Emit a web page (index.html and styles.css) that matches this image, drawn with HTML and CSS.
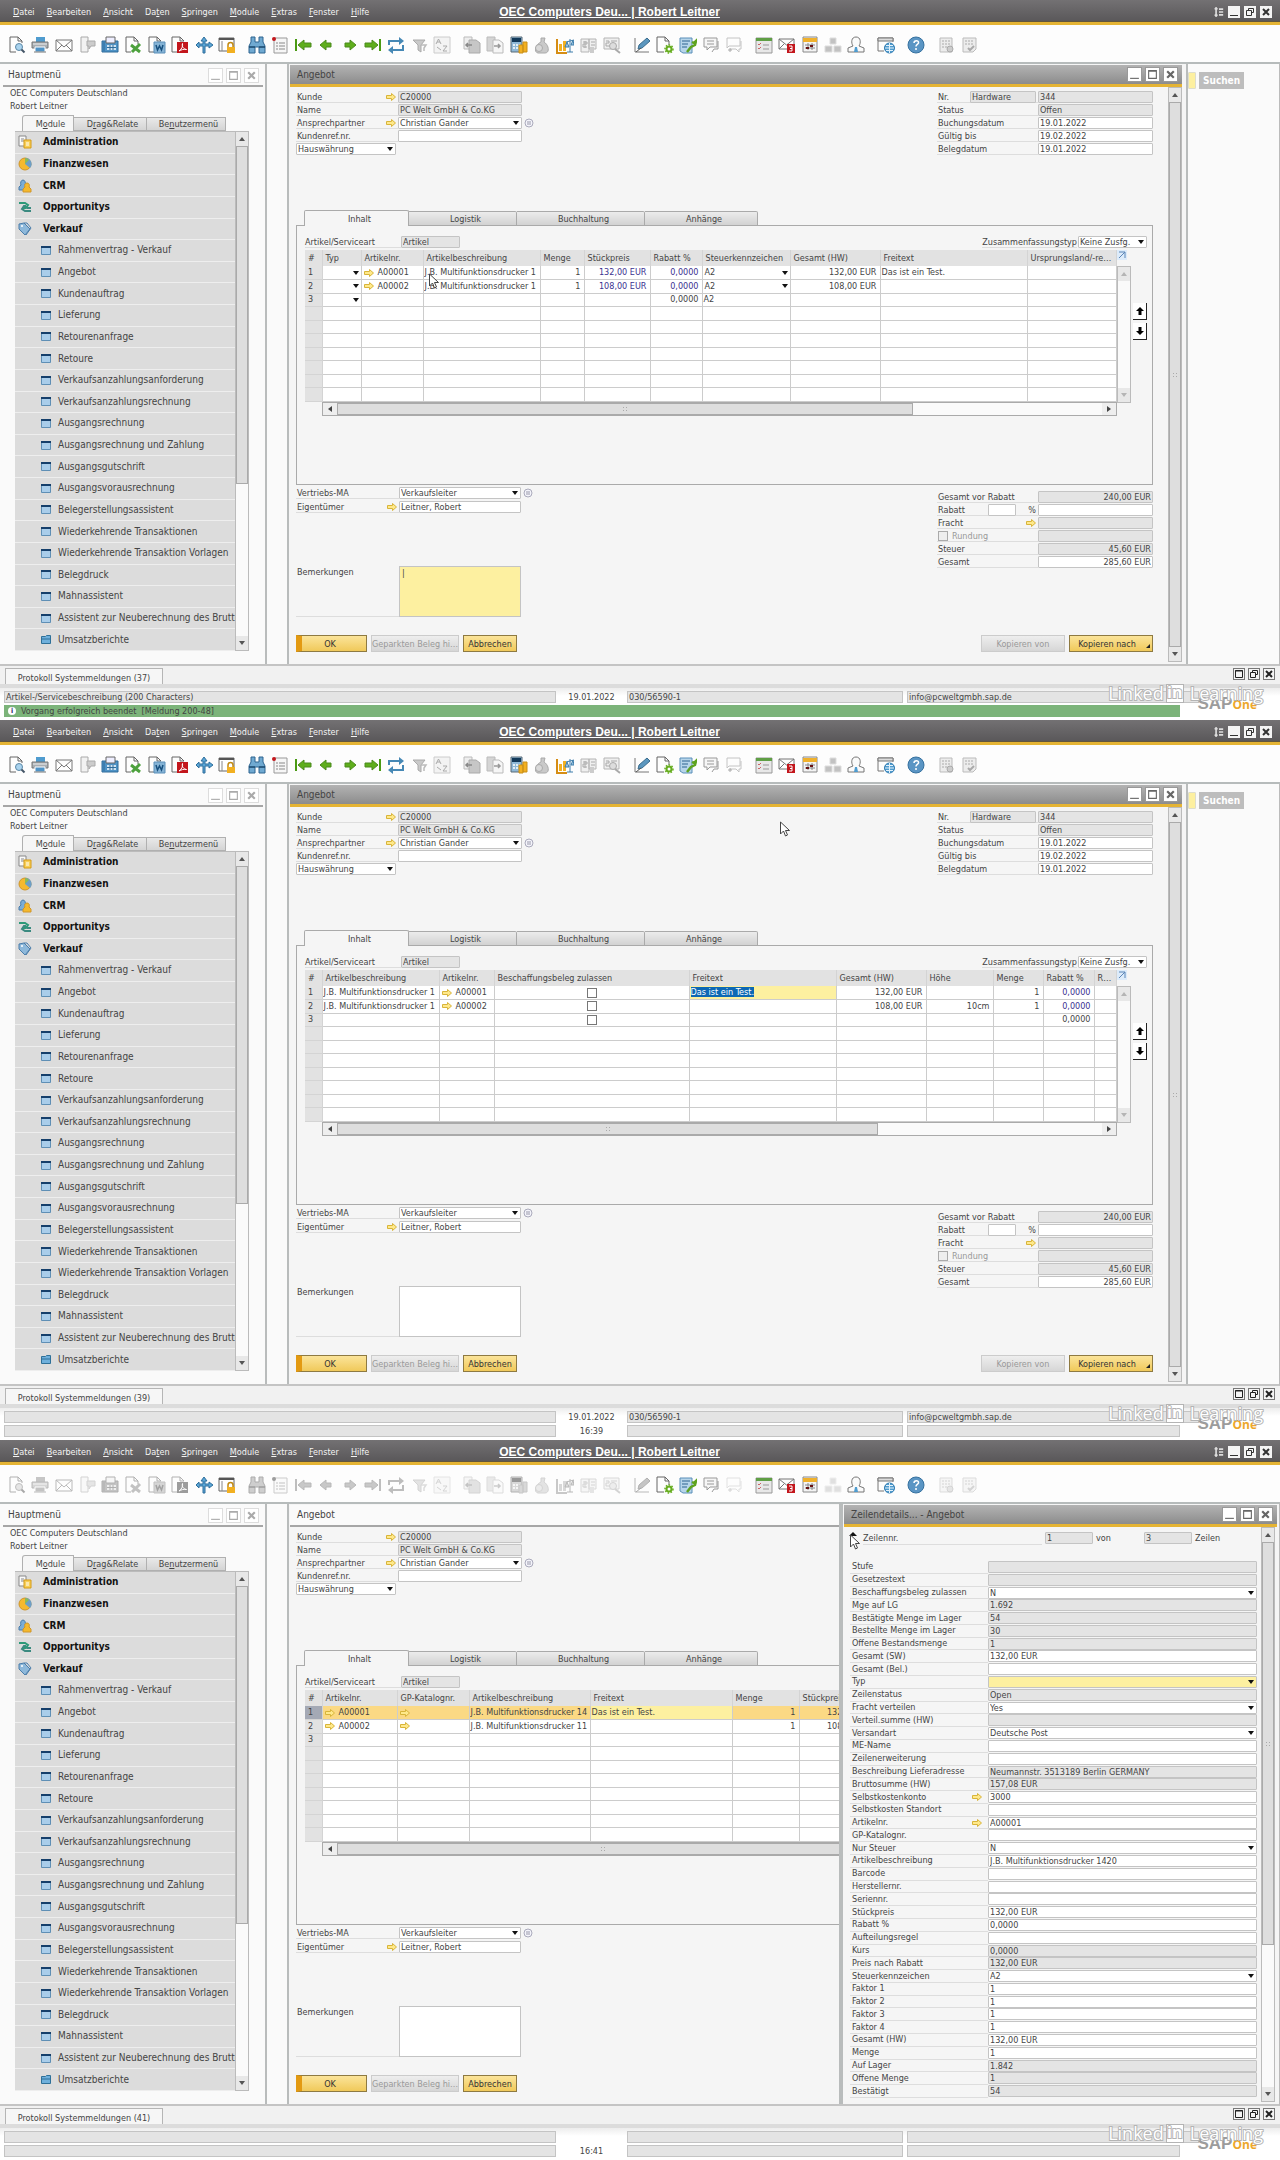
FILE: index.html
```html
<!DOCTYPE html>
<html lang="de">
<head>
<meta charset="utf-8">
<meta name="viewport" content="width=device-width, initial-scale=1">
<title>OEC Computers Deutschland – Angebot</title>
<link rel="stylesheet" href="styles.css">
</head>
<body>
<svg class="sprite" aria-hidden="true">
  <symbol id="i-preview" viewBox="0 0 18 18"><path d="M2 1h8l4 4v2M2 1v15h6M10 1v4h4" fill="none" stroke="#666"/><circle cx="11" cy="11" r="3.5" fill="#a9d3ee" stroke="#5b87a6"/><path d="M13.500 13.500l3 3" stroke="#456" stroke-width="2"/></symbol>
  <symbol id="i-print" viewBox="0 0 18 18"><path d="M5 1h9v5H5z" fill="#4f9ccf"/><path d="M1 6h16v6H1z" fill="#a8aeb3" stroke="#777"/><path d="M2 8h14" stroke="#eee"/><path d="M4 11h10v5H4z" fill="#4f93c6" stroke="#fff"/><path d="M3 16h12" stroke="#777"/></symbol>
  <symbol id="i-mail" viewBox="0 0 18 18"><path d="M1 4h16v11H1zM1 4l8 7 8-7M1 15l6-6M17 15l-6-6" fill="#fff" stroke="#777"/></symbol>
  <symbol id="i-sms" viewBox="0 0 18 18"><path d="M3 1h7v15H3z" fill="#f2f2f2" stroke="#aaa"/><path d="M9 5h8v5h-4l-2 3v-3H9z" fill="#ccc" stroke="#aaa"/></symbol>
  <symbol id="i-fax" viewBox="0 0 18 18"><path d="M1 5h16v11H1z" fill="#4f93c6" stroke="#2e6b9a"/><path d="M5 1h9v6H5z" fill="#eef" stroke="#666"/><path d="M6 9h9v5H6z" fill="#cfe3f2"/><path d="M6 11.500h9M9 9v5M12 9v5M3 6v9" stroke="#2e6b9a"/></symbol>
  <symbol id="i-excel" viewBox="0 0 18 18"><path d="M1 1h8l4 4v3M1 1v15h5M9 1v4h4" fill="none" stroke="#666"/><path d="M6 9l9 7M15 8l-8 8" stroke="#4da13d" stroke-width="3"/></symbol>
  <symbol id="i-word" viewBox="0 0 18 18"><path d="M1 1h8l4 4M1 1v15h5M9 1v4h4" fill="none" stroke="#666"/><path d="M6 6h11v11H6z" fill="#86b4d6" stroke="#5a8fb9"/><path d="M8 9l1.500 5 2-4 2 4 1.500-5" fill="none" stroke="#17507f" stroke-width="1.500"/></symbol>
  <symbol id="i-pdf" viewBox="0 0 18 18"><path d="M1 1h8l4 4M1 1v15h5M9 1v4h4" fill="none" stroke="#666"/><path d="M6 6h11v11H6z" fill="#c3161c"/><path d="M8 15c3-2 4-5 3.500-7.500-1 3 1 5.500 4 6-3-.5-5 .2-7.500 1.500z" fill="none" stroke="#fff"/></symbol>
  <symbol id="i-move" viewBox="0 0 18 18"><path d="M9 1l3 4h-2v3h4V6l4 3-4 3v-2h-4v7H8v-7H4v2L1 9l3-3v2h4V5H6z" fill="#5aa5d5" stroke="#2e6f9d"/></symbol>
  <symbol id="i-lock" viewBox="0 0 18 18"><path d="M1 2h15v13H1z" fill="#fff" stroke="#666"/><path d="M1 3h15" stroke="#555" stroke-width="2"/><path d="M4 5v10" stroke="#888"/><path d="M10 11V9a2.500 2.500 0 015 0v2" fill="none" stroke="#c28a12" stroke-width="1.500"/><path d="M9 11h8v6H9z" fill="#f2b021"/></symbol>
  <symbol id="i-find" viewBox="0 0 18 18"><path d="M3 1h4v5h4V1h4v5l2 4v7h-6v-6H7v6H1v-7l2-4z" fill="#6fa9d1" stroke="#2e6490"/><path d="M1 11h6M11 11h6" stroke="#17456b" stroke-width="1.500"/></symbol>
  <symbol id="i-list" viewBox="0 0 18 18"><path d="M3 2h13v15H3z" fill="#f6f6f6" stroke="#999"/><path d="M5 7h2M8 7h6M5 10h2M8 10h6M5 13h2M8 13h6" stroke="#888"/><circle cx="3" cy="3" r="2" fill="#c3161c"/></symbol>
  <symbol id="i-first" viewBox="0 0 18 18"><path d="M2 3v12" stroke="#4a9a14" stroke-width="2"/><path d="M4 9l6-5v3h7v4h-7v3z" fill="#5fae1c" stroke="#4b8a1c"/></symbol>
  <symbol id="i-prev" viewBox="0 0 18 18"><path d="M3 9l6-5v3h5v4H9v3z" fill="#5fae1c" stroke="#4b8a1c"/></symbol>
  <symbol id="i-next" viewBox="0 0 18 18"><path d="M15 9L9 4v3H4v4h5v3z" fill="#5fae1c" stroke="#4b8a1c"/></symbol>
  <symbol id="i-last" viewBox="0 0 18 18"><path d="M16 3v12" stroke="#4a9a14" stroke-width="2"/><path d="M14 9L8 4v3H1v4h7v3z" fill="#5fae1c" stroke="#4b8a1c"/></symbol>
  <symbol id="i-refresh" viewBox="0 0 18 18"><path d="M2 9V5h12M16 9v5H4" fill="none" stroke="#4688b5" stroke-width="2"/><path d="M12 1l5 4-5 4zM6 10l-5 4 5 4z" fill="#4688b5"/></symbol>
  <symbol id="i-filter" viewBox="0 0 18 18"><path d="M3 4h12l-4 5v7l-3-2V9z" fill="#c9c9c9" stroke="#aaa"/><path d="M11 9h5l-2 3v3" fill="none" stroke="#bbb" stroke-width="1.500"/></symbol>
  <symbol id="i-sort" viewBox="0 0 18 18"><path d="M1 1h16v16H1z" fill="#f3f3f3" stroke="#ccc"/><path d="M3 8l2.500-5L8 8M4 6h3M10 10h4l-4 5h4M4 11l4 3" fill="none" stroke="#aaa"/></symbol>
  <symbol id="i-copyfrom" viewBox="0 0 18 18"><path d="M1 1h8v12H1z" fill="#eee" stroke="#bbb"/><path d="M6 4h7l4 3v10H6z" fill="#c6c6c6" stroke="#aaa"/><path d="M3 9h6M5 7L3 9l2 2" fill="none" stroke="#888" stroke-width="1.500"/></symbol>
  <symbol id="i-copyto" viewBox="0 0 18 18"><path d="M1 1h8v14H1z" fill="#d5d5d5" stroke="#bbb"/><path d="M7 4h6l4 3v10H7z" fill="#f6f6f6" stroke="#bbb"/><path d="M8 10h6M12 8l2 2-2 2" fill="none" stroke="#999" stroke-width="1.500"/></symbol>
  <symbol id="i-calc" viewBox="0 0 18 18"><path d="M1 1h11v15H1z" fill="#8fb9d8" stroke="#5b6b77"/><path d="M2 2h9v4H2z" fill="#12395a"/><path d="M3 9h7M3 12h7" stroke="#fff" stroke-dasharray="2 1" stroke-width="1.500"/><path d="M9 9h4v8H9zM13 6h4v10h-4z" fill="#f2b021" stroke="#c98f18"/></symbol>
  <symbol id="i-bag" viewBox="0 0 18 18"><path d="M8 2h4l-1 4c5 3 6 11 1 11H5C0 16 3 8 8 6z" fill="#c9c9c9" stroke="#aaa"/><circle cx="6" cy="12" r="3.500" fill="#d9d9d9" stroke="#aaa"/></symbol>
  <symbol id="i-volume" viewBox="0 0 18 18"><path d="M1 3v14h10" fill="none" stroke="#d58d14" stroke-width="2"/><path d="M3 8h3v7H3zM7 5h3v10H7z" fill="#f2b021"/><path d="M14 3v13M10 6l8-2M9 11l2-5 2 5zM15 9l2-5 1 5zM11 16h6" fill="#9cc7e4" stroke="#3d7dab"/></symbol>
  <symbol id="i-journal" viewBox="0 0 18 18"><path d="M1 3h8v13H1zM9 3h7v10H9z" fill="#efefef" stroke="#b5b5b5"/><path d="M3 6h4v2H3v3h4M11 6h4M11 9h4M5 5v7" fill="none" stroke="#aaa"/><path d="M10 11h4v6h-4z" fill="#ccc"/></symbol>
  <symbol id="i-journal2" viewBox="0 0 18 18"><path d="M1 2h15v11H1z" fill="#efefef" stroke="#b5b5b5"/><path d="M3 5h3v2H3v3h3M8 5h6" fill="none" stroke="#aaa"/><circle cx="10" cy="10" r="3.500" fill="#ddd" stroke="#aaa"/><path d="M12 13l5 4" stroke="#aaa" stroke-width="2"/></symbol>
  <symbol id="i-pen" viewBox="0 0 18 18"><path d="M2 2v14h14" fill="none" stroke="#777"/><path d="M5 13l1-4 8-7 3 3-8 7z" fill="#5b97bf" stroke="#3b6c8d"/><path d="M3 16l5-4" stroke="#555"/></symbol>
  <symbol id="i-newdoc" viewBox="0 0 18 18"><path d="M1 1h8l4 4v4M1 1v15h7M9 1v4h4" fill="none" stroke="#666"/><circle cx="13" cy="13" r="2.500" fill="none" stroke="#65ad1e" stroke-width="2"/><circle cx="13" cy="13" r="4" fill="none" stroke="#65ad1e" stroke-dasharray="1.500 1.500" stroke-width="1.500"/></symbol>
  <symbol id="i-editdoc" viewBox="0 0 18 18"><path d="M1 2h12v15H4l-3-2z" fill="#b7d5ea" stroke="#5a8fb9"/><path d="M3 5h8M3 8h6M3 11h5" stroke="#2e6490"/><path d="M8 16l4-5 4-2 1-4-2 2-2-1" fill="none" stroke="#5da31f" stroke-width="2.500"/></symbol>
  <symbol id="i-chat" viewBox="0 0 18 18"><path d="M2 2h13v9H8l-3 3v-3H2z" fill="#f6f6f6" stroke="#999"/><path d="M5 5h7M5 8h7" stroke="#999"/><path d="M16 5v8h-4l-2 3" fill="none" stroke="#999"/></symbol>
  <symbol id="i-chat2" viewBox="0 0 18 18"><path d="M2 2h13v8H4l-2 2zM16 5v8h-2v3l-3-3H5" fill="none" stroke="#c4c4c4"/><path d="M3 14h4M5 12v4" stroke="#aaa"/></symbol>
  <symbol id="i-tasks" viewBox="0 0 18 18"><path d="M1 2h16v15H1z" fill="#e8e8e8" stroke="#999"/><path d="M1 2h16v3H1z" fill="#5f9f45"/><path d="M3 8l1 1 2-2M3 12l1 1 2-2" fill="none" stroke="#c66"/><path d="M8 9h6M8 13h6" stroke="#999"/></symbol>
  <symbol id="i-alert" viewBox="0 0 18 18"><path d="M1 3h15v10H1zM1 3l7.500 6L16 3M1 13l5-5" fill="#fff" stroke="#777"/><path d="M9 8h8v9H9z" fill="#c3161c"/><path d="M11 10h3v5h-3M12 12.500h2" fill="none" stroke="#fff"/></symbol>
  <symbol id="i-calendar" viewBox="0 0 18 18"><path d="M2 1h14v15H2z" fill="#f3f3f3" stroke="#888"/><path d="M2 2h14v4H2z" fill="#f0b12c"/><path d="M4 9h10M4 12h10M7 7v7M11 7v7" stroke="#888"/><path d="M5 11h3v2H5zM9 9h3v2H9z" fill="#611"/></symbol>
  <symbol id="i-org" viewBox="0 0 18 18"><path d="M6 2h6v6H6zM1 10h7v6H1zM10 10h7v6h-7z" fill="#c2c2c2" stroke="#ddd"/></symbol>
  <symbol id="i-user" viewBox="0 0 18 18"><path d="M6 10c-2-3-2-9 3-9s5 6 3 9l5 2v4H1v-4z" fill="#fafafa" stroke="#777"/><path d="M8 11h2l1 5H7z" fill="#4f9ccf"/></symbol>
  <symbol id="i-web" viewBox="0 0 18 18"><path d="M1 15V2h15v4" fill="none" stroke="#777"/><path d="M1 2h15v3H1z" fill="#ddd" stroke="#777"/><path d="M1 15h6" stroke="#777"/><circle cx="12.500" cy="12" r="5" fill="#4f9ccf" stroke="#2e7ab0"/><path d="M8 12h9M12.500 7v10M9 9.500h7M9 14.500h7" stroke="#e2f1fb"/></symbol>
  <symbol id="i-help" viewBox="0 0 18 18"><circle cx="9" cy="9" r="8" fill="#5a95c4" stroke="#35719f"/><path d="M7 7c0-3 5-3 4.500 0C11 8.500 9 8.500 9 10.500M9 12v2" fill="none" stroke="#fff" stroke-width="1.500"/></symbol>
  <symbol id="i-sheet" viewBox="0 0 18 18"><path d="M3 2h12v14H3z" fill="#ececec" stroke="#bbb"/><path d="M5 5h8M5 8h8M5 11h5" stroke="#aaa" stroke-dasharray="2 1"/><circle cx="13" cy="13" r="3" fill="#ccc" stroke="#aaa"/></symbol>
  <symbol id="i-sheet2" viewBox="0 0 18 18"><path d="M3 2h13v11l-3 3H3z" fill="#ececec" stroke="#bbb"/><path d="M5 5h9M5 8h9" stroke="#aaa" stroke-dasharray="2 1"/><path d="M8 12l2 2 4-4" fill="none" stroke="#aaa" stroke-width="2"/></symbol>
  <symbol id="i-admin" viewBox="0 0 14 14"><path d="M1 1h7v10H1z" fill="#fafafa" stroke="#888"/><path d="M3 4h3M3 6h3" stroke="#888"/><path d="M6 5h7v8H6z" fill="#f7cf57" stroke="#d59a16"/><path d="M8 8h3M8 10h3" stroke="#fff"/></symbol>
  <symbol id="i-finance" viewBox="0 0 14 14"><circle cx="7" cy="7" r="6" fill="#f5b92e" stroke="#d0962a"/><path d="M7 7V1a6 6 0 015 10z" fill="#6d9fc7"/><path d="M7 7V1a6 6 0 014 2z" fill="#8cba57"/></symbol>
  <symbol id="i-crm" viewBox="0 0 14 14"><path d="M1 11V8l2-2c-1-2 0-5 2-5s3 3 2 5l2 2v3z" fill="#7badd6" stroke="#4a7dab"/><path d="M5 13v-3l2-2c-1-2 0-4 2-4s3 2 2 4l2 2v3z" fill="#f5b92e" stroke="#d0962a"/></symbol>
  <symbol id="i-opp" viewBox="0 0 14 14"><path d="M1 3h6l3 2-2 3H4" fill="none" stroke="#2d9a78" stroke-width="2"/><path d="M8 6H6l-2 3 3 2h6M9 8h4" fill="none" stroke="#3b8a80" stroke-width="2"/></symbol>
  <symbol id="i-sales" viewBox="0 0 14 14"><path d="M1 2l5-1 6 6-5 6-6-6z" fill="#8db8da" stroke="#4a7dab"/><path d="M6 1h3l4 5-5 7" fill="none" stroke="#4a7dab"/><circle cx="4" cy="4" r="1" fill="#fff"/></symbol>
  <symbol id="i-form" viewBox="0 0 10 9"><path d="M.5.5h9v8h-9z" fill="#a9cdea" stroke="#5f8fb5"/><path d="M0 1h10" stroke="#153f6b" stroke-width="2"/></symbol>
  <symbol id="i-folder" viewBox="0 0 10 9"><path d="M.5 1.500h4l1-1h4v8h-9z" fill="#6fb0dc" stroke="#2f7098"/><path d="M1 4h8" stroke="#2f7098"/></symbol>
  <symbol id="i-link" viewBox="0 0 10 8"><path d="M.5 2.500h5v-2l4 3.500-4 3.500v-2h-5z" fill="#ffe98a" stroke="#d8b43a"/></symbol>
  <symbol id="i-info" viewBox="0 0 10 10"><circle cx="5" cy="5" r="4" fill="#f4f4fb" stroke="#aab"/><path d="M3 4h4M3 6h4" stroke="#99a"/></symbol>
  <symbol id="i-expand" viewBox="0 0 10 10"><path d="M0 0h10v10H0z" fill="#dcebfa"/><path d="M2 2h6v6M8 2L2 8" fill="none" stroke="#5a86b8"/></symbol>
  <symbol id="i-up" viewBox="0 0 8 10"><path d="M4 1l4 4H5.500v4h-3V5H0z" fill="#000"/></symbol>
  <symbol id="i-down" viewBox="0 0 8 10"><path d="M4 9l4-4H5.500V1h-3v4H0z" fill="#000"/></symbol>
  <symbol id="i-cursor" viewBox="0 0 10 16"><path d="M.5 1v12l3-3 2 5 2-1-2-4.500h4z" fill="#fff" stroke="#444"/></symbol>
  <symbol id="i-min" viewBox="0 0 10 10"><path d="M1 8.500h8" stroke="currentColor"/></symbol>
  <symbol id="i-max" viewBox="0 0 10 10"><path d="M1.500 1.500h7v7h-7zM1 2h8" fill="none" stroke="currentColor"/></symbol>
  <symbol id="i-restore" viewBox="0 0 10 10"><path d="M3.500 3.500v-2h5v4h-2M1.500 3.500h5v5h-5z" fill="none" stroke="currentColor"/></symbol>
  <symbol id="i-close" viewBox="0 0 10 10"><path d="M2 2l6 6M8 2L2 8" stroke="currentColor" stroke-width="2"/></symbol>
  <symbol id="i-arrange" viewBox="0 0 12 12"><path d="M2.500 1v10M1 3l1.500-2L4 3M1 9l1.500 2L4 9M6 2.500h5M6 6h5M6 9.500h5" fill="none" stroke="#ddd" stroke-width="2"/></symbol>
</svg>
<main id="screens"></main>
<script src="app.js"></script>
</body>
</html>
```
FILE: styles.css
```css
* { box-sizing: border-box; }
html, body { margin: 0; }
body {
  font-family: "DejaVu Sans Condensed", Tahoma, "Noto Sans", sans-serif;
  font-size: 9px;
  line-height: 12px;
  color: #444;
  background: #fafafa;
}
button, input, select, textarea { font: inherit; color: inherit; margin: 0; padding: 0; border-radius: 0; }
button { border: 0; background: none; }
ul { list-style: none; margin: 0; padding: 0; }
svg { display: block; flex: none; }
a { color: inherit; text-decoration: none; }
.sprite { position: absolute; width: 0; height: 0; }
#screens { display: grid; grid-auto-rows: 1fr; min-height: 100vh; }

.screen { position: relative; display: flex; flex-direction: column; min-width: 0; overflow: hidden; }

/* menu bar */
.menubar {
  display: flex; align-items: center; height: 25px; padding-bottom: 2px;
  color: #f4f4f4; background: linear-gradient(#737173, #5a585a 21px, #6b5420 22px, #e5b434 22px);
}
.menubar nav { flex: 0 0 39%; display: flex; gap: 12px; padding-left: 13px; }
.company { margin: 0; font: bold 12px/14px "Liberation Sans", sans-serif; text-decoration: underline; color: #fff; white-space: nowrap; }
.app-controls { margin-left: auto; display: flex; gap: 4px; align-items: center; padding-right: 8px; }
.app-controls button { width: 12px; height: 12px; color: #333; background: #f4f4f4; display: grid; place-items: center; }
.app-controls svg { width: 10px; height: 10px; }

/* toolbar */
.toolbar { display: flex; gap: 12px; height: 39px; padding: 3px 8px 0; align-items: center; background: #fdfdfd; border-bottom: 2px solid #b6bbbb; }
.group { display: flex; justify-content: space-between; }
.group button, .group svg { width: 18px; height: 18px; }
.g10 { width: 228px; } .g9 { width: 203px; } .g7 { width: 158px; } .g5 { width: 110px; } .g2 { width: 41px; }
.group button.off { filter: grayscale(1) opacity(.5); }

/* desktop */
.desktop { flex: 1; display: flex; min-height: 0; border-bottom: 2px solid #c4c4c4; border-right: 1px solid #bbb; }
.window { display: flex; flex-direction: column; min-width: 0; min-height: 0; background: #f5f5f5; border: 2px solid #b9bcbc; border-width: 0 2px 0 2px; padding: 1px 2px 2px; }
.titlebar { flex: none; display: flex; align-items: center; gap: 3px; height: 22px; padding: 3px 4px 3px 7px; font-size: 10px; border-bottom: 3px solid #e5b434; background: linear-gradient(#b3b3b3, #8c8c8c); }
.titlebar h2 { flex: 1; margin: 0; font: inherit; white-space: nowrap; }
.titlebar button { width: 15px; height: 15px; border: 1px solid #999; background: #fff; color: #666; display: grid; place-items: center; }
.titlebar svg { width: 11px; height: 11px; }
.idle .titlebar { background: #fafafa; border-bottom: 2px solid #a6a6a6; }
.idle .titlebar button { border-color: #ddd; color: #aaa; }

/* main menu */
.mainmenu { flex: 0 0 267px; border-left: 0; padding-left: 3px; background: #fafafa; }
.mainmenu .titlebar { padding-left: 5px; }
.who { padding: 0 7px; line-height: 13px; }
.who p { margin: 0; }
.menutabs { display: flex; align-items: flex-end; margin: 2px 0 0 19px; }
.menutabs button { height: 14px; border: 1px solid #b0b0b0; border-left-width: 0; background: linear-gradient(#e9e9e9, #d4d4d4); padding: 0 0 0 5px; }
.menutabs button:first-child { height: 16px; width: 52px; background: #f6f6f6; border-left-width: 1px; border-bottom: 0; border-radius: 3px 0 0; }
.menutabs button:nth-child(2) { width: 73px; }
.menutabs button:nth-child(3) { width: 79px; }
.tree { flex: 1; display: flex; min-height: 0; margin: 0 14px 11px 12px; }
.tree ul { flex: 1; min-width: 0; display: grid; grid-auto-rows: 1fr; background: #dcdcdc; border-top: 1px solid #bbb; }
.tree li { display: flex; align-items: center; min-height: 0; border-bottom: 1px solid #eee; overflow: hidden; font-size: 10px; }
.tree li a { display: flex; align-items: center; white-space: nowrap; padding-left: 26px; gap: 7px; }
.tree li svg { width: 10px; height: 9px; }
.tree .area { font-weight: bold; color: #111; }
.tree .area a { padding-left: 3px; gap: 11px; }
.tree .area svg { width: 14px; height: 14px; }

/* scroll bars */
.vscroll { flex: 0 0 14px; display: grid; grid-template-rows: 14px auto 1fr 14px; border: 1px solid #bbb; background: #fafafa; }
.vscroll i { display: grid; place-items: center; background: #e8e8e8; }
.vscroll i::after { content: ""; border: 3px solid transparent; border-bottom: 4px solid #555; border-top: 0; }
.vscroll i:last-child { grid-row: 4; }
.vscroll i:last-child::after { border-bottom: 0; border-top: 4px solid #555; }
.thumb { background: #dedede; border: 1px solid #aaa; display: grid; place-items: center; overflow: hidden; }
.tree .vscroll { grid-template-rows: 14px 69fr 31fr 14px; }
.main .vscroll.page { grid-template-rows: 14px 1fr 0 14px; }
.vscroll.faint i::after { opacity: .35; }
.faint .thumb { border: 0; background: none; }
.hscroll { display: grid; grid-template-columns: 14px auto 1fr 14px; height: 14px; margin-left: 17px; border: 1px solid #aaa; background: #fafafa; }
.hscroll i { display: grid; place-items: center; background: #eee; }
.hscroll i::after { content: ""; border: 3px solid transparent; border-right: 4px solid #444; border-left: 0; }
.hscroll i:last-child::after { border-right: 0; border-left: 4px solid #444; }
.grip { width: 6px; height: 6px; background: radial-gradient(circle, #aaa 1px, transparent 1px) 0 0 / 3px 3px; }

/* document window */
.main { flex: 1; margin-left: 20px; padding-left: 1px; padding-right: 4px; }
.rest { flex: 0 0 91px; display: flex; gap: 3px; padding-top: 8px; align-items: flex-start; }
.rest input[type=text] { width: 8px; height: 17px; border: 1px solid #ddc; background: #fdf0a0; }
.rest button { height: 17px; padding: 0 4px; font-weight: bold; font-size: 10px; color: #fff; background: #bdbdbd; }
.doc { flex: 1; display: flex; min-height: 0; overflow: hidden; }
.sheet { flex: 1; display: flex; flex-direction: column; padding: 4px 15px 10px 6px; min-width: 0; }
.clipped { padding-right: 0; }
.clipped .sheet { flex: 0 0 878px; }
.head { display: flex; justify-content: space-between; align-items: flex-start; height: 119px; }
.form { display: grid; grid-template-columns: 102px 124px 14px; grid-auto-rows: 12px; row-gap: 1px; }
.form.right { grid-template-columns: 101px 115px; }
.form label, .form .cap { grid-column: 1; display: flex; align-items: center; justify-content: space-between; height: 12px; padding: 0 2px 0 1px; border-bottom: 1px solid #ddd; white-space: nowrap; }
.form .cap label { border: 0; padding: 0; }
svg.link { width: 10px; height: 8px; }
svg.info { width: 10px; height: 10px; margin: 1px 2px; }
input[type=text], .combo select { width: 100%; height: 12px; border: 1px solid #c4c4c4; border-radius: 1px; background: #fff; padding: 0 1px; line-height: 10px; }
input[type=text]:read-only { background: #e4e4e4; }
.cap input[type=text] { width: 66px; }
.cap input[type=text].small { width: 28px; }
.num { text-align: right; }
.combo { position: relative; display: block; }
.combo select { display: block; appearance: none; }
.combo::after { content: ""; position: absolute; right: 3px; top: 4px; border: 3px solid transparent; border-top: 4px solid #111; border-bottom: 0; pointer-events: none; }
.combo.wide { grid-column: 1; width: 100px; }
.hot select { background: #fdf0a0; }

.tabs { display: flex; align-items: flex-end; height: 16px; padding-left: 8px; position: relative; z-index: 1; margin-bottom: -1px; }
.tabs button { height: 15px; border: 1px solid #aaa; border-left-width: 0; background: linear-gradient(#ececec, #d2d2d2); border-radius: 0 2px 0 0; padding-left: 6px; }
.tabs button:first-child { height: 16px; width: 105px; background: #f5f5f5; border-left-width: 1px; border-bottom: 0; border-radius: 2px 2px 0 0; }
.tabs button:nth-child(2) { width: 108px; } .tabs button:nth-child(3) { width: 128px; } .tabs button:nth-child(4) { width: 113px; }
.panel { height: 260px; border: 1px solid #aaa; padding: 10px 5px 0 8px; }
.panel-top { display: flex; height: 14px; align-items: flex-start; }
.panel-top label { white-space: nowrap; border-bottom: 1px solid #ddd; height: 12px; }
.panel-top label:first-child { width: 96px; }
.panel-top input[type=text] { width: 59px; }
.panel-top label.sum { margin-left: auto; }
.panel-top .combo { width: 69px; margin-left: 1px; }
.matrix { display: flex; }
.gridbox { flex: 1; min-width: 0; }
table { width: 100%; height: 152px; table-layout: fixed; border-collapse: collapse; }
th, td { padding: 0 3px; font-weight: normal; text-align: left; overflow: hidden; white-space: nowrap; line-height: 11px; }
th { height: 16px; background: #e2e2e2; border-right: 1px solid #d4d4d4; }
td { height: 13px; background: #fff; border: 1px solid #ccc; border-width: 0 1px 1px 0; padding: 0 1px; }
tbody th { height: 13px; background: #e2e2e2; border-bottom: 1px solid #d4d4d4; }
td.num { padding-right: 3px; }
td.blue { color: #3a3290; }
.cell { display: flex; gap: 4px; align-items: center; height: 11px; padding: 0 1px; }
.drop::after { content: ""; margin-left: auto; border: 3px solid transparent; border-top: 4px solid #111; border-bottom: 0; }
td input[type=checkbox] { appearance: none; display: block; width: 10px; height: 10px; margin: 0 auto; border: 1px solid #777; background: #fff; }
td.edit { background: #fdf0a0; }
td.edit mark { background: #0d68b4; color: #fff; }
tr.picked td { background: #fbd984; }
tr.picked td.edit { background: #fdf0a0; }
tr.picked th { background: #a4a9b5; }
.side { flex: 0 0 14px; display: flex; flex-direction: column; }
.side > svg { width: 10px; height: 10px; margin-bottom: 6px; }
.side .vscroll { flex: 0 0 137px; }
.movers { flex: 0 0 16px; padding: 53px 0 0 2px; display: flex; flex-direction: column; gap: 3px; }
.movers button { width: 14px; height: 17px; display: grid; place-items: center; border: 1px solid #222; border-width: 0 1px 1px 0; background: #fff; }
.movers svg { width: 8px; height: 10px; }

.foot { flex: 1; display: flex; justify-content: space-between; padding-top: 2px; align-items: flex-start; }
.foot .form:first-child { row-gap: 2px; grid-template-columns: 103px 122px 14px; }
.foot .form.right { padding-top: 4px; }
.memo { margin-top: 51px; height: 51px; }
.form label.memo { align-items: flex-start; height: 51px; }
textarea.memo { display: block; width: 100%; resize: none; border: 1px solid #c4c4c4; background: #fff; padding: 0 2px; }
textarea.hot { background: #fdf0a0; }
.check input { appearance: none; width: 10px; height: 10px; border: 1px solid #aaa; background: #eee; }
.form .cap.check { justify-content: flex-start; gap: 4px; color: #999; }
.buttons { display: flex; gap: 4px; }
.buttons button { height: 17px; border: 1px solid #8e7a42; background: linear-gradient(#fbe49a, #f0c95a); color: #333; white-space: nowrap; }
.buttons .ok { width: 71px; padding-right: 8px; border-left: 6px solid #e39a12; }
.buttons .park { width: 88px; }
.buttons .cancel { width: 54px; }
.buttons button:disabled { border-color: #ccc; background: linear-gradient(#eee, #d6d6d6); color: #999; }
.buttons .copy { width: 84px; }
.buttons .from { margin-left: auto; }
.buttons .menu { position: relative; padding-right: 8px; }
.buttons .menu::after { content: ""; position: absolute; right: 2px; bottom: 3px; border: 2px solid transparent; border-right-color: #222; border-bottom-color: #222; }

/* line details window */
.details { flex: 0 0 438px; border-right: 0; padding-left: 1px; }
.details .rows { flex: 1; min-width: 0; display: flex; flex-direction: column; padding: 4px 4px 4px 6px; }
.lineno { display: flex; align-items: center; height: 30px; padding-bottom: 16px; gap: 3px; }
.lineno input[type=text] { width: 48px; }
.lineno .first { width: 179px; border-bottom: 1px solid #ddd; margin-left: 13px; }
.lineno .of { width: 45px; }
.fields { flex: 1; display: grid; grid-auto-rows: 1fr; min-height: 0; }
.fields > div { display: grid; grid-template-columns: 138px 1fr; min-height: 0; }
.fields label { display: flex; justify-content: space-between; align-items: center; line-height: 11px; padding: 0 6px 0 2px; border-bottom: 1px solid #ddd; min-height: 0; }
.details .vscroll { grid-template-rows: 14px 74fr 26fr 14px; margin-right: 2px; }

/* status area */
.logbar { display: flex; align-items: flex-start; height: 22px; padding: 2px 5px 0; border-bottom: 4px solid #dcdcdc; background: #f1f1f1; }
.logbar .log { width: 158px; height: 16px; padding-top: 2px; border: 1px solid #b5b5b5; border-bottom: 0; background: #f6f6f6; }
.logbar .app-controls { padding: 0; gap: 3px; }
.logbar .app-controls button { width: 12px; height: 12px; border: 1px solid #777; color: #222; }
.status { display: grid; grid-template-columns: 552px 1fr 276px 273px 96px; grid-auto-rows: 12px; gap: 2px 4px; height: 32px; padding: 3px 0 2px 4px; background: linear-gradient(#ededed, #fff 8px); }
.status output { border: 1px solid #c4c4c4; background: #e4e4e4; padding: 0 1px; line-height: 11px; overflow: hidden; white-space: nowrap; }
.status time { text-align: center; }
.status .tail { margin-left: -5px; width: 20px; border-left: 0; grid-column: 5; }
.status .done { grid-column: 1 / 5; display: flex; gap: 5px; padding-left: 4px; align-items: center; background: #7cb47a; border: 0; }
.status .done b { width: 8px; height: 8px; border-radius: 4px; background: #fff; color: #226; font-size: 7px; line-height: 8px; text-align: center; }
.status .done, .status .second { grid-row: 2; }

/* brand marks over the status area */
.brand { position: absolute; right: 17px; bottom: 16px; display: flex; align-items: center; gap: 2px; font: 18px/22px "Open Sans", sans-serif; color: #fff; -webkit-text-stroke: 2px #b4b4b4; paint-order: stroke fill; white-space: nowrap; }
.brand b { width: 18px; height: 19px; font-size: 16px; line-height: 15px; text-align: center; border: 1px solid #b4b4b4; background: #fff; margin-right: 4px; }
.sap { position: absolute; right: 23px; bottom: 6px; font: bold 17px/20px "Liberation Sans", sans-serif; color: #9c9c9c; }
.sap span { font: bold 12px/14px "Open Sans", sans-serif; color: #eda72c; }
.cursor { position: absolute; width: 10px; height: 16px; }
.at-row { left: 429px; top: 273px; }
.at-head { left: 780px; top: 101px; }
.at-line { left: 850px; top: 94px; }
.first-mark { border: 4px solid transparent; border-bottom-color: #111; border-top: 0; position: absolute; left: 849px; top: 92px; }
```
FILE: app.js
```js
const icon = (name, cls = '') => `<svg class="${cls}" aria-hidden="true"><use href="#i-${name}"/></svg>`;
const link = icon('link', 'link');
// "_x" marks the access key of a caption
const key = text => text.replace(/_(.)/, '<u>$1</u>');

const menus = ['_Datei', '_Bearbeiten', '_Ansicht', 'Da_ten', '_Springen', '_Module', '_Extras', '_Fenster', '_Hilfe'];
const tools = [
  ['g10', 'preview print mail sms fax excel word pdf move lock'],
  ['g9', 'find list first prev next last refresh filter sort'],
  ['g7', 'copyfrom copyto calc bag volume journal journal2'],
  ['g5', 'pen newdoc editdoc chat chat2'],
  ['g5', 'tasks alert calendar org user'],
  ['g1', 'web'], ['g1', 'help'],
  ['g2', 'sheet sheet2'],
];
const alwaysOn = 'move lock newdoc editdoc chat tasks alert calendar user web help'.split(' ');
const areas = [['admin', 'Administration'], ['finance', 'Finanzwesen'], ['crm', 'CRM'], ['opp', 'Opportunitys'], ['sales', 'Verkauf']];
const entries = ['Rahmenvertrag - Verkauf', 'Angebot', 'Kundenauftrag', 'Lieferung', 'Retourenanfrage', 'Retoure',
  'Verkaufsanzahlungsanforderung', 'Verkaufsanzahlungsrechnung', 'Ausgangsrechnung', 'Ausgangsrechnung und Zahlung',
  'Ausgangsgutschrift', 'Ausgangsvorausrechnung', 'Belegerstellungsassistent', 'Wiederkehrende Transaktionen',
  'Wiederkehrende Transaktion Vorlagen', 'Belegdruck', 'Mahnassistent', 'Assistent zur Neuberechnung des Brutto'];

const winButtons = names => names.map(n => `<button type="button" aria-label="${n}">${icon(n)}</button>`).join('');
const vscroll = (cls, grip) => `<div class="vscroll ${cls}"><i></i><div class="thumb">${grip ? '<span class="grip"></span>' : ''}</div><i></i></div>`;

// cell builders
const item = t => ({ html: `<div class="cell">${link}<span>${t}</span></div>` });
const drop = t => ({ html: `<div class="cell drop">${t}</div>` });
const num = t => ({ html: t, cls: 'num' });
const blue = t => ({ html: t, cls: 'num blue' });
const edit = t => ({ html: t, cls: 'edit' });
const box = () => ({ html: '<input type="checkbox" aria-label="Beschaffungsbeleg zulassen">' });

const screens = [
  { log: 37, hot: true, cursor: 'at-row', thumb: 576,
    cols: [['Typ', 39], ['Artikelnr.', 62], ['Artikelbeschreibung', 117], ['Menge', 44], ['Stückpreis', 66], ['Rabatt %', 52],
      ['Steuerkennzeichen', 88], ['Gesamt (HW)', 90], ['Freitext', 147], ['Ursprungsland/-re…', 0]],
    rows: [
      [drop(''), item('A00001'), 'J.B. Multifunktionsdrucker 1', num('1'), blue('132,00 EUR'), blue('0,0000'), drop('A2'), num('132,00 EUR'), 'Das ist ein Test.', ''],
      [drop(''), item('A00002'), 'J.B. Multifunktionsdrucker 1', num('1'), blue('108,00 EUR'), blue('0,0000'), drop('A2'), num('108,00 EUR'), '', ''],
      [drop(''), '', '', '', '', num('0,0000'), drop('A2'), '', '', '']] },
  { log: 39, time: '16:39', cursor: 'at-head', thumb: 541,
    cols: [['Artikelbeschreibung', 117], ['Artikelnr.', 55], ['Beschaffungsbeleg zulassen', 195], ['Freitext', 147], ['Gesamt (HW)', 90],
      ['Höhe', 67], ['Menge', 50], ['Rabatt %', 51], ['R…', 0]],
    rows: [
      ['J.B. Multifunktionsdrucker 1', item('A00001'), box(), edit('<mark>Das ist ein Test.</mark>'), num('132,00 EUR'), '', num('1'), blue('0,0000'), ''],
      ['J.B. Multifunktionsdrucker 1', item('A00002'), box(), '', num('108,00 EUR'), num('10cm'), num('1'), blue('0,0000'), ''],
      ['', '', box(), '', '', '', '', num('0,0000'), '']] },
  { log: 41, time: '16:41', cursor: 'at-line', thumb: 531, details: true,
    cols: [['Artikelnr.', 75], ['GP-Katalognr.', 72], ['Artikelbeschreibung', 121], ['Freitext', 142], ['Menge', 67], ['Stückpreis', 79], ['', 0]],
    rows: [
      [item('A00001'), item(''), 'J.B. Multifunktionsdrucker 14', edit('Das ist ein Test.'), num('1'), num('132,00 EUR'), ''],
      [item('A00002'), item(''), 'J.B. Multifunktionsdrucker 11', '', num('1'), num('108,00 EUR'), ''],
      ['', '', '', '', '', '', '']] },
];
// the third row has a tax code without a list arrow
screens[0].rows[2][6] = 'A2';

// [label, value, kind]: r = read only, e = editable, s = list, h = focused list, l = editable with link arrow
const lineFields = [
  ['Stufe', '', 'r'], ['Gesetzestext', '', 'r'], ['Beschaffungsbeleg zulassen', 'N', 's'], ['Mge auf LG', '1.692', 'r'],
  ['Bestätigte Menge im Lager', '54', 'r'], ['Bestellte Menge im Lager', '30', 'r'], ['Offene Bestandsmenge', '1', 'r'],
  ['Gesamt (SW)', '132,00 EUR', 'e'], ['Gesamt (Bel.)', '', 'e'], ['Typ', '', 'h'], ['Zeilenstatus', 'Open', 'r'],
  ['Fracht verteilen', 'Yes', 's'], ['Verteil.summe (HW)', '', 'r'], ['Versandart', 'Deutsche Post', 's'], ['ME-Name', '', 'e'],
  ['Zeilenerweiterung', '', 'e'], ['Beschreibung Lieferadresse', 'Neumannstr. 3513189 Berlin GERMANY', 'r'],
  ['Bruttosumme (HW)', '157,08 EUR', 'r'], ['Selbstkostenkonto', '3000', 'l'], ['Selbstkosten Standort', '', 'e'],
  ['Artikelnr.', 'A00001', 'l'], ['GP-Katalognr.', '', 'e'], ['Nur Steuer', 'N', 's'],
  ['Artikelbeschreibung', 'J.B. Multifunktionsdrucker 1420', 'e'], ['Barcode', '', 'e'], ['Herstellernr.', '', 'e'],
  ['Seriennr.', '', 'e'], ['Stückpreis', '132,00 EUR', 'e'], ['Rabatt %', '0,0000', 'e'], ['Aufteilungsregel', '', 'e'],
  ['Kurs', '0,0000', 'r'], ['Preis nach Rabatt', '132,00 EUR', 'r'], ['Steuerkennzeichen', 'A2', 's'], ['Faktor 1', '1', 'e'],
  ['Faktor 2', '1', 'e'], ['Faktor 3', '1', 'e'], ['Faktor 4', '1', 'e'], ['Gesamt (HW)', '132,00 EUR', 'e'], ['Menge', '1', 'e'],
  ['Auf Lager', '1.842', 'r'], ['Offene Menge', '1', 'r'], ['Bestätigt', '54', 'r'],
];

const text = (id, value, ro, cls = '') => `<input type="text" id="${id}" value="${value}" class="${cls}"${ro ? ' readonly' : ''}>`;
const combo = (id, value, cls = '', name = '') =>
  `<span class="combo ${cls}"><select id="${id}"${name ? ` aria-label="${name}"` : ''}><option>${value}</option></select></span>`;
const label = (id, caption, extra = '') => `<label for="${id}"><span>${key(caption)}</span>${extra}</label>`;

const topBars = s => `
  <header class="menubar">
    <nav>${menus.map(m => `<a href="#">${key(m)}</a>`).join('')}</nav>
    <h1 class="company">OEC Computers Deu... | Robert Leitner</h1>
    <div class="app-controls">${icon('arrange')}${winButtons(['min', 'restore', 'close'])}</div>
  </header>
  <div class="toolbar">${tools.map(([cls, names]) => `<div class="group ${cls}">${names.split(' ').map(n =>
    `<button type="button" aria-label="${n}"${s.details && !alwaysOn.includes(n) ? ' class="off"' : ''}>${icon(n)}</button>`).join('')}</div>`).join('')}</div>`;

const mainMenu = () => `
  <aside class="window idle mainmenu">
    <div class="titlebar"><h2>Hauptmenü</h2>${winButtons(['min', 'max', 'close'])}</div>
    <div class="who"><p>OEC Computers Deutschland</p><p>Robert Leitner</p></div>
    <div class="menutabs">${['M_odule', 'D_rag&amp;Relate', 'Be_nutzermenü'].map(t => `<button type="button">${key(t)}</button>`).join('')}</div>
    <div class="tree"><ul>
      ${areas.map(([i, t]) => `<li class="area"><a href="#">${icon(i)}${t}</a></li>`).join('')}
      ${entries.map(t => `<li><a href="#">${icon('form')}${t}</a></li>`).join('')}
      <li><a href="#">${icon('folder')}Umsatzberichte</a></li>
    </ul>${vscroll('')}</div>
  </aside>`;

const matrix = s => {
  const cell = c => typeof c === 'string' ? `<td>${c}</td>` : `<td class="${c.cls || ''}">${c.html}</td>`;
  const rows = Array.from({ length: 10 }, (_, i) => {
    const cells = s.rows[i] || s.cols.map(() => '');
    return `<tr${s.details && i === 0 ? ' class="picked"' : ''}><th scope="row">${i < 3 ? i + 1 : ''}</th>${cells.map(cell).join('')}</tr>`;
  }).join('');
  return `<div class="matrix"><div class="gridbox"><table>
      <colgroup><col style="width:17px">${s.cols.map(c => c[1] ? `<col style="width:${c[1]}px">` : '<col>').join('')}</colgroup>
      <thead><tr><th scope="col">#</th>${s.cols.map(c => `<th scope="col">${c[0]}</th>`).join('')}</tr></thead>
      <tbody>${rows}</tbody></table>
      <div class="hscroll"><i></i><div class="thumb" style="width:${s.thumb}px"><span class="grip"></span></div><span></span><i></i></div></div>
    <div class="side">${icon('expand')}${vscroll('faint')}</div>
    <div class="movers"><button type="button" aria-label="Nach oben">${icon('up')}</button><button type="button" aria-label="Nach unten">${icon('down')}</button></div>
  </div>`;
};

const offer = (s, n) => {
  const id = name => `${name}-${n}`;
  const full = !s.details;
  return `
  <section class="window main ${full ? '' : 'idle clipped'}">
    <div class="titlebar"><h2>Angebot</h2>${full ? winButtons(['min', 'max', 'close']) : ''}</div>
    <div class="doc"><div class="sheet">
      <div class="head">
        <div class="form">
          ${label(id('kunde'), 'Kunde', link)}${text(id('kunde'), 'C20000', true)}
          ${label(id('name'), 'Name')}${text(id('name'), 'PC Welt GmbH &amp; Co.KG', true)}
          ${label(id('ap'), 'Ansprechpartner', link)}${combo(id('ap'), 'Christian Gander')}${icon('info', 'info')}
          ${label(id('ref'), 'Kundenref.nr.')}${text(id('ref'), '')}
          ${combo(id('waehrung'), 'Hauswährung', 'wide', 'Währung')}
        </div>
        ${full ? `<div class="form right">
          <div class="cap">${label(id('serie'), 'Nr.')}${text(id('serie'), 'Hardware', true)}</div><input type="text" aria-label="Nummer" value="344" readonly>
          ${label(id('status'), 'Status')}${text(id('status'), 'Offen', true)}
          ${label(id('buch'), 'Buchungsdatum')}${text(id('buch'), '19.01.2022')}
          ${label(id('bis'), 'Gültig bis')}${text(id('bis'), '19.02.2022')}
          ${label(id('beleg'), 'Belegdatum')}${text(id('beleg'), '19.01.2022')}
        </div>` : ''}
      </div>
      <div class="tabs">${['Inhalt', 'Logistik', 'Buchhaltung', 'Anhänge'].map(t => `<button type="button">${t}</button>`).join('')}</div>
      <div class="panel">
        <div class="panel-top">${label(id('art'), 'Artikel/Serviceart')}${text(id('art'), 'Artikel', true)}
          ${full ? `<label class="sum" for="${id('zus')}">Zusammenfassungstyp</label>${combo(id('zus'), 'Keine Zusfg.')}` : ''}</div>
        ${matrix(s)}
      </div>
      <div class="foot">
        <div class="form">
          ${label(id('ma'), 'Vertriebs-MA')}${combo(id('ma'), 'Verkaufsleiter')}${icon('info', 'info')}
          ${label(id('eig'), 'Eigentümer', link)}${text(id('eig'), 'Leitner, Robert')}
          <label class="memo" for="${id('bem')}">Bemerkungen</label><textarea id="${id('bem')}" class="memo ${s.hot ? 'hot' : ''}">${s.hot ? '|' : ''}</textarea>
        </div>
        ${full ? `<div class="form right">
          ${label(id('vor'), 'Gesamt vor Rabatt')}${text(id('vor'), '240,00 EUR', true, 'num')}
          <div class="cap">${label(id('rab'), 'Rabatt')}<span></span>${text(id('rab'), '', false, 'small')}<span>%</span></div><input type="text" aria-label="Rabattbetrag">
          ${label(id('fracht'), 'Fracht', link)}${text(id('fracht'), '', true)}
          <div class="cap check"><input type="checkbox" id="${id('rund')}" disabled>${label(id('rund'), 'Rundun_g')}</div><input type="text" aria-label="Rundungsbetrag" readonly>
          ${label(id('steuer'), 'Steuer')}${text(id('steuer'), '45,60 EUR', true, 'num')}
          ${label(id('gesamt'), 'Gesamt')}${text(id('gesamt'), '285,60 EUR', false, 'num')}
        </div>` : ''}
      </div>
      <div class="buttons">
        <button type="button" class="ok">OK</button><button type="button" class="park" disabled>Geparkten Beleg hi…</button><button type="button" class="cancel">Abbrechen</button>
        ${full ? '<button type="button" class="copy from" disabled>Kopieren von</button><button type="button" class="copy menu">Kopieren nach</button>' : ''}
      </div>
    </div>${full ? vscroll('page', true) : ''}</div>
  </section>`;
};

const details = () => `
  <section class="window details">
    <div class="titlebar"><h2>Zeilendetails... - Angebot</h2>${winButtons(['min', 'max', 'close'])}</div>
    <div class="doc"><div class="rows">
      <div class="lineno"><label class="first" for="line">Zeilennr.</label>${text('line', '1', true)}<label class="of" for="lines">von</label>${text('lines', '3', true)}<span>Zeilen</span></div>
      <div class="fields">${lineFields.map(([cap, value, kind], i) => `<div${kind === 'h' ? ' class="hot"' : ''}>${label('f' + i, cap, kind === 'l' ? link : '')}${
        'sh'.includes(kind) ? combo('f' + i, value) : text('f' + i, value, kind === 'r')}</div>`).join('')}</div>
    </div>${vscroll('', true)}</div>
  </section>`;

const statusBar = s => `
  <div class="logbar"><button type="button" class="log">Protokoll Systemmeldungen (${s.log})</button>
    <div class="app-controls">${winButtons(['max', 'restore', 'close'])}</div></div>
  <footer class="status">
    <output>${s.hot ? 'Artikel-/Servicebeschreibung (200 Characters)' : ''}</output><time>${s.details ? '' : '19.01.2022'}</time>
    <output>${s.details ? '' : '030/56590-1'}</output><output>${s.details ? '' : 'info@pcweltgmbh.sap.de'}</output><output class="tail"></output>
    ${s.hot ? '<output class="done"><b>i</b>Vorgang erfolgreich beendet&nbsp; [Meldung 200-48]</output>'
      : `<output class="second"></output><time class="second">${s.time}</time><output class="second"></output><output class="second"></output>`}
  </footer>
  <div class="sap">SAP<span>One</span></div>
  <div class="brand"><span>Linked</span><b>in</b><span>Learning</span></div>`;

document.getElementById('screens').innerHTML = screens.map((s, n) => `
  <article class="screen">${topBars(s)}
    <div class="desktop">${mainMenu()}${offer(s, n)}${s.details ? details()
      : '<div class="rest"><input type="text" aria-label="Suche"><button type="button">Suchen</button></div>'}</div>
    ${statusBar(s)}${s.details ? '<span class="first-mark"></span>' : ''}${icon('cursor', 'cursor ' + s.cursor)}
  </article>`).join('');
```
